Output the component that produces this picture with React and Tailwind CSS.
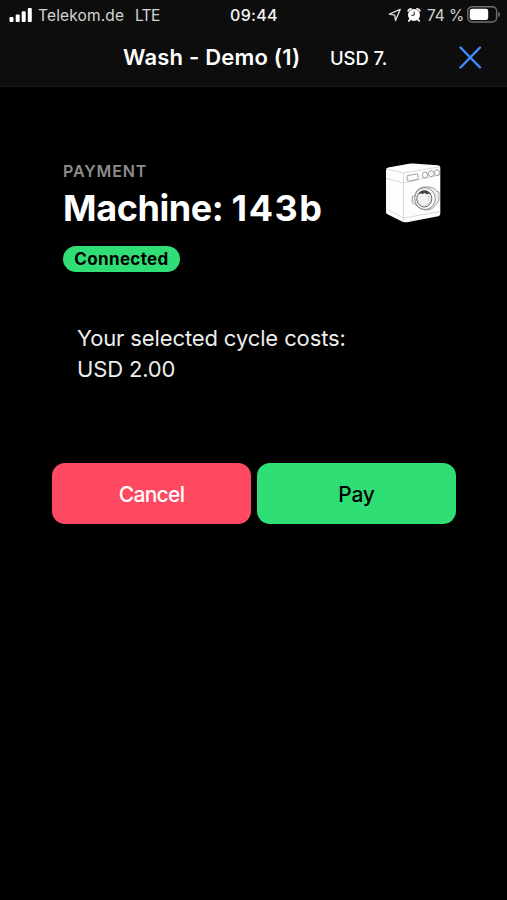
function SignalIcon() {
  return (
    <svg className="block h-[14px] w-[24px]" viewBox="0 0 24 14" fill="#fff">
      <rect x="0.5" y="9" width="4" height="5" rx="1" />
      <rect x="6.7" y="6.5" width="4" height="7.5" rx="1" />
      <rect x="12.7" y="3.3" width="4" height="10.7" rx="1" />
      <rect x="18.8" y="0" width="4" height="14" rx="1" />
    </svg>
  );
}

function LocationIcon() {
  return (
    <svg className="block h-[14px] w-[14px]" viewBox="0 0 14 14" fill="none" stroke="#d8d8d8" strokeWidth="1.4" strokeLinejoin="round">
      <path d="M12.2 1.4 1.3 6.1 6.7 7.1 7.5 12.5Z" />
    </svg>
  );
}

function AlarmIcon() {
  return (
    <svg className="block h-[16px] w-[14px]" viewBox="0 0 14 16">
      <g fill="none" stroke="#fff" strokeWidth="1.8" strokeLinecap="round">
        <path d="M1.2 3.8A3 3 0 0 1 4 1.8M12.8 3.8A3 3 0 0 0 10 1.8M3 12.5 1.8 13.8M11 12.5 12.2 13.8" />
      </g>
      <circle cx="7" cy="8" r="6" fill="#fff" />
      <path d="M7.2 4.5V8.2H4.3" fill="none" stroke="#222" strokeWidth="1" />
    </svg>
  );
}

function BatteryIcon() {
  return (
    <svg className="block h-[17px] w-[34px]" viewBox="0 0 34 17">
      <rect x="0.8" y="0.8" width="28.8" height="15.2" rx="4.3" fill="none" stroke="#707070" strokeWidth="1.4" />
      <rect x="2.8" y="2.8" width="18.4" height="11.2" rx="2.3" fill="#fff" />
      <path d="M31.2 5.8c2.3.7 2.3 4.6 0 5.3Z" fill="#707070" />
    </svg>
  );
}

function WashingMachine() {
  return (
    <svg className="block h-[60px] w-[56px]" viewBox="0 0 56 60" strokeLinejoin="round">
      <path d="M1 7.2Q1 5.2 3 4.6L24 .8Q26 .4 28 .5L53 2.3Q55.3 2.7 55.3 4.5V50.5Q55.3 52.6 53.3 53.2L22 59.2Q19 59.7 17 58.6L2 51Q1 50.3 1 49Z" fill="#fdfdfd" />
      <g fill="none" stroke="#cfcfcf" strokeWidth=".8">
        <path d="M1.4 6 18.5 10V58.5M18.5 10 55 3.7M1.3 15.3 18.5 20 55 11.9M1.3 46 18.8 55 55 48.5" />
      </g>
      <g fill="none" stroke="#8a8a8a" strokeWidth=".8">
        <path d="m22.5 12.5 9.5-1.5q1 0 1 1v3.6q0 .8-1 1l-8.6 1.5q-1.2.1-1.3-1v-3.4q0-1 .4-1.2Z" />
        <ellipse cx="40" cy="12" rx="2.7" ry="3" />
        <ellipse cx="46.2" cy="10.6" rx="2.7" ry="3" />
        <ellipse cx="52" cy="9.7" rx="2.6" ry="2.9" />
      </g>
      <path d="M37.5 24.2q10-1.8 14.2 3.8l2.2 1v8.5l-2.4 3Q48 47.5 40.5 47q-6.5-.5-9.5-5L27.2 39.5v-6l2.8-1.3q1.4-6.5 7.5-8Z" fill="#ededed" stroke="#8a8a8a" strokeWidth=".8" />
      <ellipse cx="40" cy="35.6" rx="10.3" ry="10.9" fill="#fafafa" stroke="#858585" strokeWidth=".9" />
      <ellipse cx="39.3" cy="35.8" rx="7.5" ry="8.2" fill="#f2f2f2" stroke="#666" strokeWidth="1" />
      <path d="M33.2 31.2q2.2-3.6 6.6-3.7 4.4.3 6.1 4l-2.3-1-1.4.9-2.6-1.4-2 1.1-2-.6Z" fill="#444" />
      <path d="m43.5 32 1 8-5.5 3" fill="none" stroke="#c5c5c5" strokeWidth=".8" />
    </svg>
  );
}

export default function App() {
  return (
    <div className="flex h-[900px] w-[507px] flex-col overflow-hidden bg-black font-['Inter','Liberation_Sans',sans-serif] text-white">
      <header className="h-[87px] shrink-0 border-b border-[#191919] bg-[#0d0d0d]">
        <div className="flex h-[30px] items-center whitespace-nowrap text-[15.5px] leading-[30px] text-[#d5d5d5]">
          <div className="ml-[9px] w-[29px] pb-px"><SignalIcon /></div>
          <span className="w-[97px] pt-px tracking-[0.15px]">Telekom.de</span>
          <span className="w-[95px] pt-px tracking-[-0.7px]">LTE</span>
          <span className="w-[158px] text-[16px] font-medium tracking-[0.3px] text-[#f4f4f4]">09:44</span>
          <div className="w-[19px]"><LocationIcon /></div>
          <div className="w-[20px] pb-px"><AlarmIcon /></div>
          <span className="w-[40px] pt-px tracking-[-0.1px]">74 %</span>
          <div className="pb-[2px]"><BatteryIcon /></div>
        </div>
        <div className="flex h-[54px] items-center whitespace-nowrap">
          <h1 className="ml-[123px] w-[207px] text-[22px] font-semibold leading-[54px] tracking-[0.2px]">Wash - Demo (1)</h1>
          <span className="w-[56px] overflow-hidden pt-px text-[18.5px] font-medium leading-[54px] tracking-[-0.1px]">USD 7.</span>
          <button className="ml-[72px] h-[24px] w-[24px]" aria-label="Close">
            <svg className="block h-[24px] w-[24px]" viewBox="0 0 24 24" fill="none" stroke="#428cff" strokeWidth="2.4" strokeLinecap="round">
              <path d="m2.5 2.5 19.5 20M22 2.5 2.5 22.5" />
            </svg>
          </button>
        </div>
      </header>
      <main className="flex flex-col">
        <section className="ml-[63px] mt-[72px] flex h-[113px] whitespace-nowrap">
          <div className="w-[322px]">
            <p className="h-[24px] text-[16px] font-semibold leading-[24px] tracking-[0.9px] text-[#8d8d8d]">PAYMENT</p>
            <h2 className="mt-[4px] h-[42px] text-[36px] font-bold leading-[42px] tracking-[-0.4px]">Machine: <span className="tracking-[1.5px]">143b</span></h2>
            <span className="mt-[17px] flex h-[26px] w-[117px] items-center justify-center rounded-full bg-[#2fdf75] pt-px text-[17px] font-bold tracking-[0.35px] text-black">Connected</span>
          </div>
          <div className="mt-[4px]"><WashingMachine /></div>
        </section>
        <p className="ml-[77px] mt-[51px] whitespace-nowrap text-[22px] leading-[31px] tracking-[-0.12px] text-[#ededed]">
          Your selected cycle costs:<br /><span className="tracking-[-0.15px]">USD 2.00</span>
        </p>
        <div className="ml-[52px] mt-[78px] flex gap-[6px]">
          <button className="h-[61px] w-[199px] rounded-[13px] bg-[#ff4961] pt-[2px] text-[21px] font-medium tracking-[-0.7px] text-white">Cancel</button>
          <button className="h-[61px] w-[199px] rounded-[13px] bg-[#2fdf75] pt-[2px] text-[21px] font-medium tracking-[-0.2px] text-black">Pay</button>
        </div>
      </main>
    </div>
  );
}
